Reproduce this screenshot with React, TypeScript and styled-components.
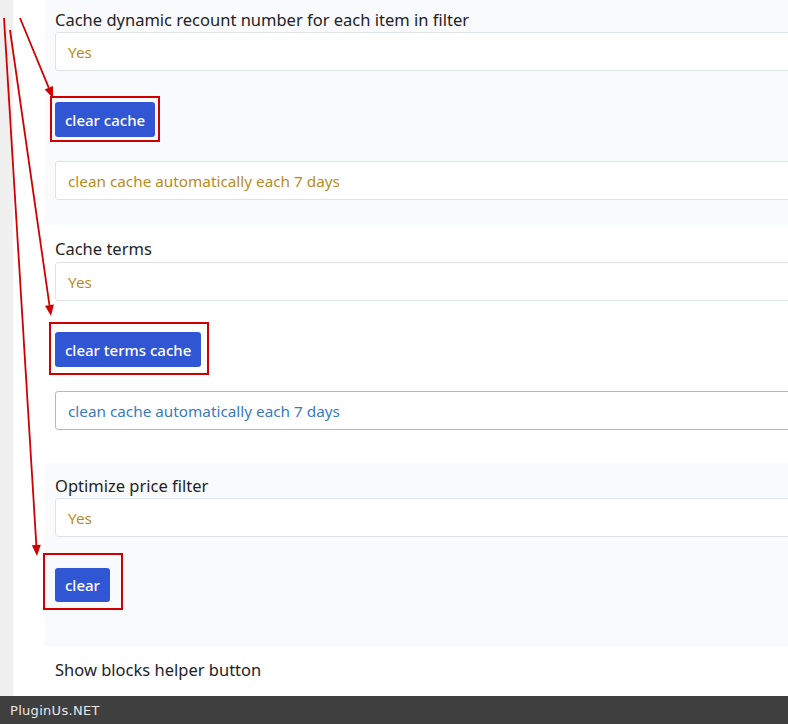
import styled, { createGlobalStyle } from "styled-components";

const GlobalStyle = createGlobalStyle`
  html, body {
    margin: 0;
    padding: 0;
    background: #ffffff;
    overflow: hidden;
  }
  body {
    font-family: "Noto Sans", "Open Sans", sans-serif;
  }
`;

const Page = styled.div`
  position: relative;
  display: flex;
  width: 788px;
  height: 724px;
  overflow: hidden;
`;

const Sidebar = styled.div`
  width: 13px;
  flex-shrink: 0;
  background: #f0f0f1;
`;

const Content = styled.div`
  flex: 1;
  padding-left: 32px;
  background: #ffffff;
`;

const Section = styled.div<{ $tinted?: boolean; $top: number; $bottom: number }>`
  width: 900px;
  padding: ${(p) => p.$top}px 0 ${(p) => p.$bottom}px 10px;
  background: ${(p) => (p.$tinted ? "#f9fafc" : "transparent")};
`;

const Label = styled.div`
  font-size: 16.5px;
  line-height: 24px;
  color: #1d2327;
`;

const Field = styled.div<{ $focused?: boolean; $gap?: number }>`
  box-sizing: border-box;
  height: 39px;
  margin-top: ${(p) => p.$gap ?? 0}px;
  padding-left: 12px;
  display: flex;
  align-items: center;
  background: #ffffff;
  border: 1px solid ${(p) => (p.$focused ? "#b4b8bd" : "#dfe2e7")};
  border-radius: 3px;
  font-size: 15.3px;
  color: ${(p) => (p.$focused ? "#3a7bbf" : "#b98b1d")};
`;

const ButtonWrap = styled.div<{ $gap: number }>`
  position: relative;
  display: inline-block;
  margin-top: ${(p) => p.$gap}px;
`;

const Button = styled.button<{ $height?: number }>`
  display: block;
  height: ${(p) => p.$height ?? 35}px;
  padding: 0 10px;
  border: none;
  border-radius: 3px;
  background: #3056d3;
  color: #ffffff;
  font-family: "Noto Sans", "Open Sans", sans-serif;
  font-size: 15px;
  font-weight: 500;
  cursor: pointer;
`;

const Highlight = styled.div<{ $l: number; $t: number; $r: number; $b: number }>`
  position: absolute;
  left: -${(p) => p.$l}px;
  top: -${(p) => p.$t}px;
  right: -${(p) => p.$r}px;
  bottom: -${(p) => p.$b}px;
  border: 2px solid #d10000;
  pointer-events: none;
`;

const Footer = styled.div`
  position: absolute;
  left: 0;
  right: 0;
  bottom: 0;
  height: 28px;
  padding-left: 10px;
  display: flex;
  align-items: center;
  background: #3f3f3f;
  color: #e8e8e8;
  font-family: "DejaVu Sans", sans-serif;
  font-size: 13px;
  letter-spacing: 0.3px;
`;

const Arrows = styled.svg`
  position: absolute;
  left: 0;
  top: 0;
  pointer-events: none;
`;

function Arrow({ x1, y1, x2, y2 }: { x1: number; y1: number; x2: number; y2: number }) {
  const a = Math.atan2(y2 - y1, x2 - x1);
  const len = 11;
  const w = 4.5;
  const bx = x2 - len * Math.cos(a);
  const by = y2 - len * Math.sin(a);
  const px = -Math.sin(a) * w;
  const py = Math.cos(a) * w;
  return (
    <g>
      <line x1={x1} y1={y1} x2={bx} y2={by} stroke="#d10000" strokeWidth={1.8} />
      <polygon points={`${x2},${y2} ${bx + px},${by + py} ${bx - px},${by - py}`} fill="#d10000" />
    </g>
  );
}

export default function App() {
  return (
    <>
      <GlobalStyle />
      <Page>
        <Sidebar />
        <Content>
          <Section $tinted $top={8} $bottom={25}>
            <Label>Cache dynamic recount number for each item in filter</Label>
            <Field>Yes</Field>
            <ButtonWrap $gap={31}>
              <Button>clear cache</Button>
              <Highlight $l={5} $t={6} $r={5} $b={5} />
            </ButtonWrap>
            <Field $gap={24}>clean cache automatically each 7 days</Field>
          </Section>

          <Section $top={12} $bottom={33}>
            <Label>Cache terms</Label>
            <Field $gap={1}>Yes</Field>
            <ButtonWrap $gap={31}>
              <Button>clear terms cache</Button>
              <Highlight $l={6} $t={10} $r={8} $b={8} />
            </ButtonWrap>
            <Field $focused $gap={24}>
              clean cache automatically each 7 days
            </Field>
          </Section>

          <Section $tinted $top={11} $bottom={44}>
            <Label>Optimize price filter</Label>
            <Field>Yes</Field>
            <ButtonWrap $gap={31}>
              <Button $height={34}>clear</Button>
              <Highlight $l={12} $t={15} $r={13} $b={8} />
            </ButtonWrap>
          </Section>

          <Section $top={12} $bottom={0}>
            <Label>Show blocks helper button</Label>
          </Section>
        </Content>

        <Arrows width={788} height={724}>
          <Arrow x1={20} y1={18} x2={53} y2={98} />
          <Arrow x1={10} y1={30} x2={51} y2={316} />
          <Arrow x1={4} y1={18} x2={37} y2={556} />
        </Arrows>

        <Footer>PluginUs.NET</Footer>
      </Page>
    </>
  );
}
